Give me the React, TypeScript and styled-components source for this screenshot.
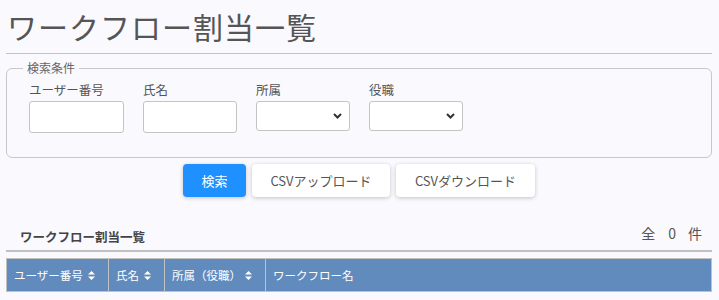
import React from "react";
import styled, { createGlobalStyle } from "styled-components";

const GlobalStyle = createGlobalStyle`
  html, body {
    margin: 0;
    padding: 0;
    background: #f9f9fe;
  }
  body {
    font-family: "Noto Sans CJK JP", "Noto Sans", sans-serif;
    color: #555;
  }
  * {
    box-sizing: border-box;
  }
`;

const Page = styled.div`
  padding: 6px 7px 0 6px;
`;

const Title = styled.h1`
  margin: 0;
  font-size: 30px;
  line-height: 40px;
  font-weight: 400;
  letter-spacing: 1px;
  color: #555;
  padding-left: 1px;
`;

const Rule = styled.hr`
  margin: 7px 0 0 0;
  border: 0;
  border-top: 1px solid #c3c3c3;
`;

const SearchBox = styled.fieldset`
  margin: 7px 0 0 0;
  padding: 5px 22px 24px 22px;
  border: 1px solid #c8c8c8;
  border-radius: 6px;
`;

const Legend = styled.legend`
  font-size: 12px;
  line-height: 14px;
  padding: 0 4px;
  margin-left: -6px;
  color: #666;
`;

const Fields = styled.div`
  display: grid;
  grid-template-columns: 95px 94px 94px 94px;
  column-gap: 19px;
  align-items: start;
`;

const Field = styled.div`
  display: flex;
  flex-direction: column;
`;

const Label = styled.label`
  font-size: 12.5px;
  line-height: 19px;
  margin-bottom: 2px;
  color: #555;
`;

const TextInput = styled.input`
  width: 100%;
  height: 32px;
  border: 1px solid #c4c4c4;
  border-radius: 3px;
  background: #fff;
  outline: none;
`;

const SelectWrap = styled.div`
  position: relative;
  width: 100%;
  height: 30px;
`;

const Select = styled.select`
  appearance: none;
  width: 100%;
  height: 30px;
  border: 1px solid #c4c4c4;
  border-radius: 3px;
  background: #fff;
  outline: none;
`;

const Chevron = styled.svg`
  position: absolute;
  right: 8px;
  top: 12px;
  pointer-events: none;
`;

const ButtonRow = styled.div`
  display: flex;
  justify-content: center;
  gap: 6px;
  margin-top: 6px;
`;

const Button = styled.button<{ $primary?: boolean; $w: number }>`
  width: ${(p) => p.$w}px;
  height: 33px;
  border: 0;
  border-radius: 4px;
  font-family: inherit;
  font-size: 13px;
  background: ${(p) => (p.$primary ? "#1e90ff" : "#fff")};
  color: ${(p) => (p.$primary ? "#fff" : "#555")};
  box-shadow: 0 1px 4px rgba(0, 0, 0, 0.22);
  cursor: pointer;
`;

const ListHeader = styled.div`
  display: flex;
  justify-content: space-between;
  align-items: flex-start;
  height: 30px;
  margin-top: 25px;
  border-bottom: 2px solid #c0c0c0;
  padding: 0 10px 0 14px;
`;

const ListTitle = styled.div`
  font-size: 12.5px;
  line-height: 18px;
  font-weight: 700;
  margin-top: 6px;
  color: #444;
`;

const Count = styled.div`
  font-size: 14px;
  line-height: 18px;
  margin-top: 2px;
  color: #555;
`;

const CountNum = styled.span`
  margin: 0 12px 0 13px;
`;

const Table = styled.table`
  width: 100%;
  margin-top: 6px;
  border-collapse: collapse;
  table-layout: fixed;
`;

const Th = styled.th`
  height: 33px;
  background: #628bbd;
  border: 1px solid #c0c0c0;
  color: #fff;
  font-size: 11.5px;
  font-weight: 400;
  text-align: left;
  white-space: nowrap;
  padding: 0 13px 0 7px;
`;

const ThInner = styled.div`
  display: flex;
  justify-content: space-between;
  align-items: center;

  svg {
    flex-shrink: 0;
  }
`;

const SortIcon = () => (
  <svg width="7" height="9" viewBox="0 0 7 9">
    <path d="M3.5 0 L7 3.6 L0 3.6 Z M0 5.4 L7 5.4 L3.5 9 Z" fill="#fff" />
  </svg>
);

const SortHead = ({ children }: { children: React.ReactNode }) => (
  <Th>
    <ThInner>
      <span>{children}</span>
      <SortIcon />
    </ThInner>
  </Th>
);

const DropDown = () => (
  <SelectWrap>
    <Select defaultValue="">
      <option value=""></option>
    </Select>
    <Chevron width="9" height="6" viewBox="0 0 9 6">
      <path d="M1 1 L4.5 4.5 L8 1" stroke="#333" strokeWidth="2" fill="none" />
    </Chevron>
  </SelectWrap>
);

export default function App() {
  return (
    <Page>
      <GlobalStyle />
      <Title>ワークフロー割当一覧</Title>
      <Rule />
      <SearchBox>
        <Legend>検索条件</Legend>
        <Fields>
          <Field>
            <Label>ユーザー番号</Label>
            <TextInput />
          </Field>
          <Field>
            <Label>氏名</Label>
            <TextInput />
          </Field>
          <Field>
            <Label>所属</Label>
            <DropDown />
          </Field>
          <Field>
            <Label>役職</Label>
            <DropDown />
          </Field>
        </Fields>
      </SearchBox>
      <ButtonRow>
        <Button $primary $w={63}>検索</Button>
        <Button $w={138}>CSVアップロード</Button>
        <Button $w={139}>CSVダウンロード</Button>
      </ButtonRow>
      <ListHeader>
        <ListTitle>ワークフロー割当一覧</ListTitle>
        <Count>
          全<CountNum>0</CountNum>件
        </Count>
      </ListHeader>
      <Table>
        <colgroup>
          <col style={{ width: 102 }} />
          <col style={{ width: 56 }} />
          <col style={{ width: 101 }} />
          <col />
        </colgroup>
        <thead>
          <tr>
            <SortHead>ユーザー番号</SortHead>
            <SortHead>氏名</SortHead>
            <SortHead>所属（役職）</SortHead>
            <Th>ワークフロー名</Th>
          </tr>
        </thead>
      </Table>
    </Page>
  );
}
